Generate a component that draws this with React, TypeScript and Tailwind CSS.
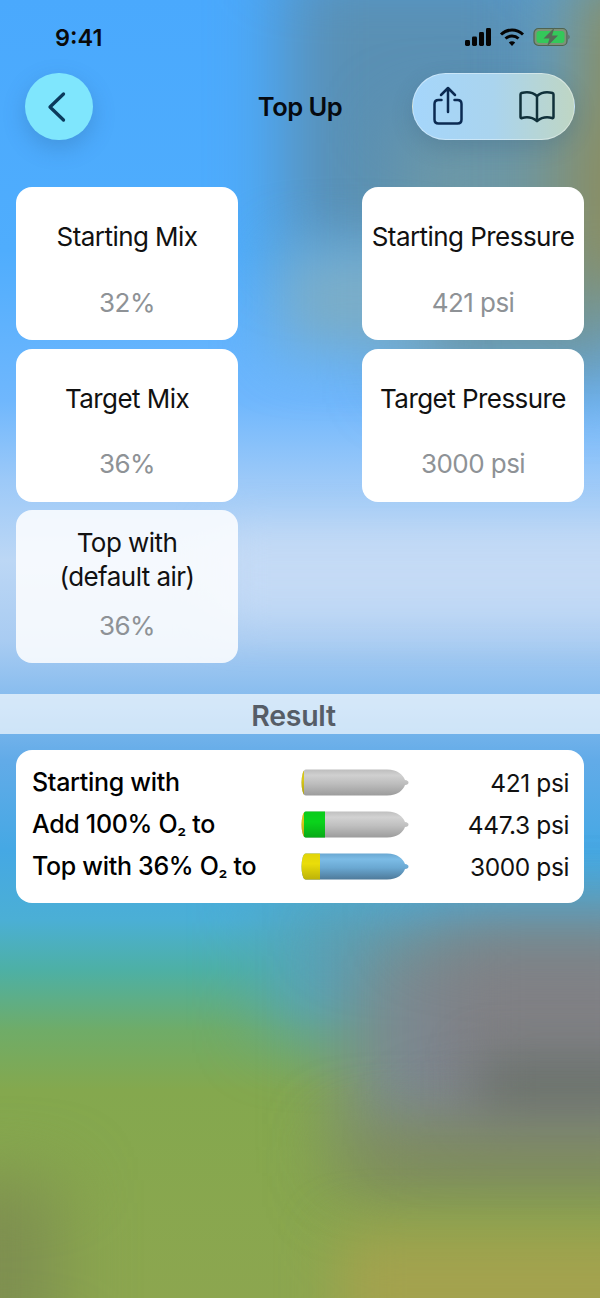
import React from "react";

const font = "font-['Inter','Liberation_Sans',sans-serif]";

function Cylinder({ id, body, bodyDark, bodyMid, cap, capW, band }: { id: string; body: string; bodyDark: string; bodyMid: string; cap: string; capW: number; band?: number }) {
  const outline = "M5 0.5 H86 C97 0.5 102 6 104 11 Q107.500 11.500 107.500 13.500 Q107.500 15.500 104 16 C102 21 97 26.500 86 26.500 H5 Q2.500 26.500 1.500 22 Q0.500 18 0.500 13.500 Q0.500 9 1.500 5 Q2.500 0.500 5 0.500 Z";
  return (
    <svg width="108" height="27" viewBox="0 0 108 27">
      <defs>
        <linearGradient id={id + "b"} x1="0" y1="0" x2="0" y2="1">
          <stop offset="0" stopColor={bodyMid} />
          <stop offset="0.22" stopColor={body} />
          <stop offset="0.55" stopColor={bodyMid} />
          <stop offset="1" stopColor={bodyDark} />
        </linearGradient>
        <linearGradient id={id + "s"} x1="0" y1="0" x2="0" y2="1">
          <stop offset="0" stopColor="#000" stopOpacity="0.04" />
          <stop offset="0.4" stopColor="#000" stopOpacity="0" />
          <stop offset="1" stopColor="#000" stopOpacity="0.2" />
        </linearGradient>
        <clipPath id={id + "c"}>
          <path d={outline} />
        </clipPath>
      </defs>
      <path d={outline} fill={`url(#${id}b)`} />
      <g clipPath={`url(#${id}c)`}>
        <rect x="0" y="0" width={capW} height="27" fill={cap} />
        {band ? <rect x={capW} y="0" width={band} height="27" fill="#0ad31c" /> : null}
        <rect x="0" y="0" width={capW + (band ?? 0)} height="27" fill={`url(#${id}s)`} />
      </g>
    </svg>
  );
}

function Card({ title, value, soft }: { title: React.ReactNode; value: string; soft?: boolean }) {
  return (
    <div className={`w-[222px] h-[153px] rounded-[16px] flex flex-col items-center ${soft ? "bg-white/85" : "bg-white"}`}>
      <div className="h-[100px] flex items-center justify-center text-center text-[26px] leading-[34px] text-[#111] tracking-[-0.55px] whitespace-nowrap">{title}</div>
      <div className="h-[30px] flex items-center text-[26px] text-[#8e9296] tracking-[-0.55px]">{value}</div>
    </div>
  );
}

function Row({ label, value, children }: { label: React.ReactNode; value: string; children: React.ReactNode }) {
  return (
    <div className="h-[42px] grid grid-cols-[269px_108px_1fr] items-center">
      <div className="pt-[2px] text-[25px] font-medium text-black tracking-[-0.31px] whitespace-nowrap">{label}</div>
      <div className="flex items-center">{children}</div>
      <div className="pt-[2px] -mr-px text-right text-[24.5px] text-[#111] tracking-[-0.4px]">{value}</div>
    </div>
  );
}

const O2 = () => (
  <span>
    O<span className="text-[20px]">₂</span>
  </span>
);

export default function App() {
  return (
    <div className={`${font} relative w-[600px] h-[1298px] overflow-hidden bg-[linear-gradient(180deg,#4aa9fd_0px,#4fadfd_250px,#6fb7fd_400px,#9cc9f8_480px,#bcd7f5_560px,#a9ccf2_640px,#85bbee_700px,#62abe8_760px,#45a8e4_850px,#4bafd5_920px,#4db0a5_970px,#6fac68_1030px,#84a84e_1090px,#8ca64f_1298px)]`}>
      {/* Blurred backdrop */}
      <div className="absolute inset-0 overflow-hidden">
        <div className="absolute left-[285px] top-[-40px] w-[260px] h-[300px] bg-[#5a90b4] blur-[35px]" />
        <div className="absolute left-[400px] top-[120px] w-[240px] h-[260px] bg-[#6d98a6] blur-[35px]" />
        <div className="absolute left-[280px] top-[250px] w-[150px] h-[100px] bg-[#7cadc6] blur-[30px]" />
        <div className="absolute left-[565px] top-[-40px] w-[120px] h-[340px] bg-[#8f8c58] blur-[40px]" />
        <div className="absolute left-[220px] top-[530px] w-[460px] h-[90px] bg-[#c4daf5] blur-[22px]" />
        <div className="absolute left-[270px] top-[900px] w-[110px] h-[130px] bg-[#55a4bc] blur-[35px]" />
        <div className="absolute left-[350px] top-[930px] w-[330px] h-[220px] bg-[#7a8a96] blur-[40px]" />
        <div className="absolute left-[430px] top-[930px] w-[260px] h-[190px] bg-[#808084] blur-[40px]" />
        <div className="absolute left-[480px] top-[1060px] w-[180px] h-[50px] bg-[#68706a] blur-[25px]" />
        <div className="absolute left-[340px] top-[1135px] w-[340px] h-[50px] bg-[#7d8258] blur-[35px]" />
        <div className="absolute left-[340px] top-[1235px] w-[340px] h-[110px] bg-[#a4a24e] blur-[28px]" />
        <div className="absolute left-[-80px] top-[1180px] w-[140px] h-[170px] bg-[#7e8f50] blur-[35px]" />
      </div>

      <div className="relative">
        {/* Status bar */}
        <div className="h-[73px] pl-[55px] pr-[29px] pt-[24px] flex justify-between items-start">
          <div className="text-[23.5px] font-semibold leading-[28px] text-[#0a0a0a]">9:41</div>
          <div className="flex items-center gap-[8px] pt-[3px]">
            <svg width="26" height="20" viewBox="0 0 26 20" fill="#050505">
              <rect x="0" y="13" width="5" height="6" rx="1.4" />
              <rect x="7" y="9.500" width="5" height="9.500" rx="1.4" />
              <rect x="14" y="5" width="5" height="14" rx="1.4" />
              <rect x="21" y="1" width="5" height="18" rx="1.4" />
            </svg>
            <svg width="26" height="20" viewBox="0 0 26 20" fill="none" stroke="#050505" strokeWidth="3">
              <path d="M2 7.500 C8.500 1.500 17.500 1.500 24 7.500" />
              <path d="M6.500 11.500 C10 8.300 16 8.300 19.500 11.500" />
              <path d="M13 19 L9.800 15.400 C11.600 13.900 14.400 13.900 16.200 15.400 Z" fill="#050505" stroke="none" />
            </svg>
            <svg width="38" height="20" viewBox="0 0 38 20">
              <rect x="1" y="1.500" width="33" height="17" rx="4.500" fill="#7d9178" stroke="#4f6350" strokeWidth="1.200" />
              <rect x="3.500" y="4" width="28" height="12" rx="3" fill="#34c85a" />
              <path d="M35.500 7.500 Q37.500 10 35.500 12.500 Z" fill="#4e5f48" />
              <path d="M21.500 0.500 L10.500 11.500 H16.500 L14 19.500 L25 8.500 H19 Z" fill="#566a58" />
            </svg>
          </div>
        </div>

        {/* Navigation */}
        <div className="h-[67px] pl-[25px] pr-[25px] grid grid-cols-[1fr_auto_1fr] items-center">
          <div className="w-[68px] h-[67px] rounded-full bg-[#7fe6fd] flex items-center justify-center pr-[5px] shadow-[0_8px_22px_rgba(40,90,140,0.28)]">
            <svg width="19" height="32" viewBox="0 0 19 32" fill="none" stroke="#0b3a5c" strokeWidth="3.300" strokeLinecap="round" strokeLinejoin="round">
              <path d="M16.500 3 L3 16 L16.500 29" />
            </svg>
          </div>
          <div className="pt-[2px] text-[25.5px] font-semibold text-[#060a10] tracking-[-0.5px] text-center">Top Up</div>
          <div className="justify-self-end w-[163px] h-[67px] rounded-full border border-white/40 bg-[linear-gradient(90deg,#a5d6fb_0%,#aad4ee_50%,#bfd6c4_100%)] flex items-center justify-between pl-[19px] pr-[19px] shadow-[0_8px_22px_rgba(40,70,100,0.2)]">
            <svg className="-mt-[2px]" width="32" height="40" viewBox="0 0 32 40" fill="none" stroke="#0b2a52" strokeWidth="2.500" strokeLinecap="round" strokeLinejoin="round">
              <path d="M9.500 14 H6.500 Q2.500 14 2.500 18 V33.500 Q2.500 37.500 6.500 37.500 H25.500 Q29.500 37.500 29.500 33.500 V18 Q29.500 14 25.500 14 H22.500" />
              <path d="M16 26 V2.500 M9 9 L16 2 L23 9" />
            </svg>
            <svg width="36" height="34" viewBox="0 0 36 34" fill="none" stroke="#10303a" strokeWidth="2.500" strokeLinecap="round" strokeLinejoin="round">
              <path d="M18 6 C14 2.500 8 1.500 2.500 3 Q1.500 3.300 1.500 4.500 V27 Q1.500 28.500 3 28 C8 26.500 13 27 18 31 C23 27 28 26.500 33 28 Q34.500 28.500 34.500 27 V4.500 Q34.500 3.300 33.500 3 C28 1.500 22 2.500 18 6 Z" />
              <path d="M18 6 V31" />
            </svg>
          </div>
        </div>

        {/* Inputs */}
        <div className="mt-[47px] px-[16px] flex justify-between">
          <div className="flex flex-col gap-[8.5px]">
            <Card title="Starting Mix" value="32%" />
            <Card title="Target Mix" value="36%" />
            <Card
              soft
              title={
                <span>
                  Top with
                  <br />
                  (default air)
                </span>
              }
              value="36%"
            />
          </div>
          <div className="flex flex-col gap-[8.5px]">
            <Card title="Starting Pressure" value="421 psi" />
            <Card title="Target Pressure" value="3000 psi" />
          </div>
        </div>

        {/* Result header */}
        <div className="mt-[31px] h-[40px] bg-white/65 flex items-center justify-center pr-[13px] pt-[5px] text-[28.5px] font-semibold text-[#565d67] tracking-[-0.3px]">Result</div>

        {/* Result card */}
        <div className="mx-[16px] mt-[16px] h-[153px] rounded-[16px] bg-white px-[16px] py-[11px]">
          <Row label="Starting with" value="421 psi">
            <Cylinder id="a" body="#d0d0d0" bodyMid="#bdbdbd" bodyDark="#9c9c9c" cap="#d8c81a" capW={3} />
          </Row>
          <Row
            label={
              <>
                Add 100% <O2 /> to
              </>
            }
            value="447.3 psi"
          >
            <Cylinder id="b" body="#d2d2d2" bodyMid="#bfbfbf" bodyDark="#9c9c9c" cap="#d8c81a" capW={3} band={21} />
          </Row>
          <Row
            label={
              <>
                Top with 36% <O2 /> to
              </>
            }
            value="3000 psi"
          >
            <Cylinder id="c" body="#7cbce6" bodyMid="#6aa8d2" bodyDark="#4e7a9a" cap="#eadd0a" capW={19} />
          </Row>
        </div>
      </div>
    </div>
  );
}
